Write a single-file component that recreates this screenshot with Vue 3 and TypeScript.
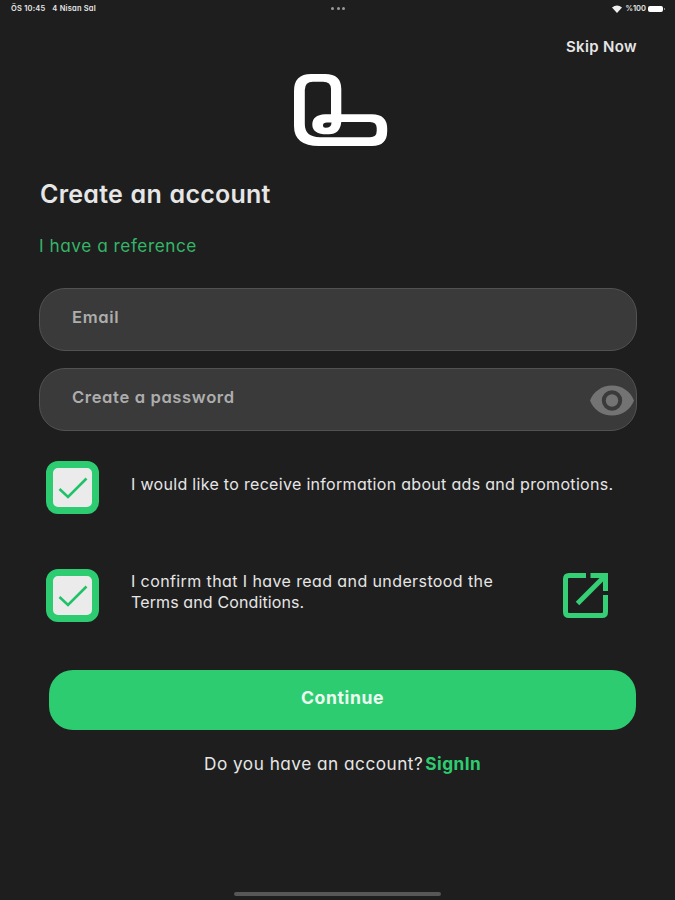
<script setup lang="ts">
import { ref } from 'vue'

interface Consent {
  id: string
  lines: string[]
  checked: boolean
  link: boolean
}

const email = ref('')
const password = ref('')
const showPassword = ref(false)

const consents = ref<Consent[]>([
  {
    id: 'ads',
    lines: ['I would like to receive information about ads and promotions.'],
    checked: true,
    link: false,
  },
  {
    id: 'terms',
    lines: ['I confirm that I have read and understood the', 'Terms and Conditions.'],
    checked: true,
    link: true,
  },
])
</script>

<template>
  <div class="screen">
    <header class="status">
      <div class="status-left"><span class="time">ÖS 10:45</span><span class="date">4 Nisan Sal</span></div>
      <div class="dots"><i></i><i></i><i></i></div>
      <div class="status-right">
        <svg class="wifi" viewBox="0 0 10 8"><path d="M5 8 0 2.6Q5-1.8 10 2.6Z" /></svg>
        <span class="percent">%100</span>
        <span class="battery"></span><span class="cap"></span>
      </div>
    </header>

    <div class="skip-row"><button class="skip">Skip Now</button></div>

    <svg class="logo" viewBox="0 0 94 74">
      <path
        fill-rule="evenodd"
        d="M0 52V17Q0 0 17 0H31Q47.300 0 47.300 15V40.300H78Q93.200 40.300 93.200 55V57Q93.200 72 78 72H25Q0 72 0 52Z
        M10.800 50V16Q10.800 7.700 19 7.700H29Q37 7.700 37 15V40.300H31Q18.300 41 18.300 50.500Q18.300 60.300 33 60.300H35Q46 60.300 47.300 48H76Q82.700 48 82.700 54V57Q82.700 63.200 76 63.200H26Q10.800 63.200 10.800 50Z
        M37.500 48.500H33Q29 48.500 29 51.300Q29 53.800 31.500 53.800Q37.500 53.800 37.500 48.500Z"
      />
    </svg>

    <main class="form">
      <h1 class="title">Create an account</h1>
      <a class="reference">I have a reference</a>

      <label class="field"><input v-model="email" class="input email" type="text" placeholder="Email" /></label>
      <label class="field">
        <input v-model="password" class="input password" :type="showPassword ? 'text' : 'password'" placeholder="Create a password" />
        <svg class="eye" viewBox="0 0 44 30" @click="showPassword = !showPassword">
          <path
            fill-rule="evenodd"
            d="M22 0C12 0 3.500 6 0 15C3.500 24 12 30 22 30S40.500 24 44 15C40.500 6 32 0 22 0ZM22 4.800A10.200 10.200 0 1 1 22 25.200A10.200 10.200 0 1 1 22 4.800Z"
          />
          <circle cx="22" cy="15" r="6.200" />
        </svg>
      </label>

      <div v-for="c in consents" :key="c.id" class="consent" :class="c.id">
        <button class="check" @click="c.checked = !c.checked">
          <svg v-if="c.checked" viewBox="0 0 30 22"><path d="M1.500 12 10 20 28.500 1.500" /></svg>
        </button>
        <div class="consent-text">
          <p v-for="line in c.lines" :key="line">{{ line }}</p>
        </div>
        <svg v-if="c.link" class="open" viewBox="0 0 45 45">
          <path class="box" d="M23 2.500H6Q2.500 2.500 2.500 6V39Q2.500 42.500 6 42.500H39Q42.500 42.500 42.500 39V22" />
          <path class="head" d="M27.500 2.500H42.500V18" />
          <path class="shaft" d="M41.500 3.500 14.500 30.500" />
        </svg>
      </div>

      <button class="continue">Continue</button>
      <p class="signin"><span class="question">Do you have an account?</span><a>SignIn</a></p>
    </main>

    <div class="home"></div>
  </div>
</template>

<style>
body {
  margin: 0;
  background: #1e1e1e;
}
</style>

<style scoped>
.screen {
  box-sizing: border-box;
  width: 675px;
  height: 900px;
  display: flex;
  flex-direction: column;
  overflow: hidden;
  background: #1e1e1e;
  color: #e6e6e6;
  font-family: Inter, 'Noto Sans', sans-serif;
  font-feature-settings: 'cv11';
}
button {
  border: 0;
  padding: 0;
  font: inherit;
  font-feature-settings: inherit;
  color: inherit;
}
h1,
p {
  margin: 0;
}
.status {
  display: grid;
  grid-template-columns: 1fr auto 1fr;
  align-items: center;
  height: 17px;
  padding: 0 10px 0 11px;
  font-size: 7.5px;
  font-weight: 600;
  white-space: nowrap;
}
.status-left {
  display: flex;
  gap: 7px;
  letter-spacing: 0.2px;
}
.dots {
  display: flex;
  gap: 2.5px;
}
.dots i {
  width: 3px;
  height: 3px;
  border-radius: 50%;
  background: #999;
}
.status-right {
  display: flex;
  justify-content: flex-end;
  align-items: center;
}
.wifi {
  width: 10px;
  height: 8px;
  margin-right: 3px;
  fill: #eee;
}
.battery {
  width: 15px;
  height: 6px;
  margin-left: 2px;
  border-radius: 2px;
  background: #fff;
}
.cap {
  width: 1px;
  height: 2px;
  margin-left: 1px;
  background: #888;
}
.skip-row {
  display: flex;
  justify-content: flex-end;
  height: 57px;
  padding: 20px 38px 0 0;
  box-sizing: border-box;
}
.skip {
  height: 20px;
  background: none;
  font-size: 15px;
  line-height: 20px;
  font-weight: 600;
  letter-spacing: 0.35px;
}
.logo {
  width: 94px;
  height: 74px;
  margin-left: 294px;
  fill: #fff;
}
.form {
  display: flex;
  flex-direction: column;
  padding: 30px 38px 0 39px;
}
.title {
  height: 32px;
  padding-left: 1px;
  font-size: 25px;
  line-height: 32px;
  font-weight: 600;
  letter-spacing: 0.25px;
  word-spacing: 1px;
}
.reference {
  height: 24px;
  margin-top: 24px;
  font-size: 17.2px;
  line-height: 24px;
  letter-spacing: 0.55px;
  color: #35b568;
}
.field {
  display: flex;
  align-items: center;
  box-sizing: border-box;
  height: 63px;
  margin-top: 17px;
  padding: 0 2px 0 32px;
  border: 1px solid #525252;
  border-radius: 26px;
  background: #3a3a3a;
}
.reference + .field {
  margin-top: 30px;
}
.input {
  flex: 1;
  min-width: 0;
  height: 24px;
  margin-bottom: 5px;
  padding: 0;
  border: 0;
  outline: 0;
  background: none;
  color: #e6e6e6;
  font: 600 16.6px/24px Inter, sans-serif;
  font-feature-settings: inherit;
  letter-spacing: 0.62px;
}
.input::placeholder {
  color: #adadad;
  opacity: 1;
}
.eye {
  width: 44px;
  height: 31px;
  margin-top: 1px;
  fill: #737373;
}
.consent {
  display: flex;
  height: 53px;
  margin-top: 55px;
  padding-left: 7px;
}
.consent.ads {
  margin-top: 30px;
}
.check {
  display: flex;
  align-items: center;
  justify-content: center;
  box-sizing: border-box;
  flex: none;
  width: 53px;
  height: 53px;
  border: 7px solid #2ecc71;
  border-radius: 12px;
  background: #ebebeb;
}
.check svg {
  width: 30px;
  height: 22px;
  margin-top: 1px;
  fill: none;
  stroke: #20c268;
  stroke-width: 2.6;
}
.consent-text {
  flex: 1;
  margin: 13px 0 0 32px;
  font-size: 16px;
  line-height: 20.5px;
  letter-spacing: 0.31px;
  white-space: nowrap;
}
.terms .consent-text {
  margin-top: 2px;
  letter-spacing: 0.4px;
}
.terms .consent-text p + p {
  letter-spacing: 0.12px;
}
.open {
  flex: none;
  width: 45px;
  height: 45px;
  margin: 4px 29px 0 0;
  fill: none;
  stroke: #35cf75;
  stroke-width: 5;
}
.continue {
  height: 60px;
  margin: 48px 1px 0 10px;
  padding-bottom: 5px;
  border-radius: 24px;
  background: #2ecc71;
  color: #ecfaf1;
  font-size: 17.6px;
  font-weight: 700;
  letter-spacing: 0.6px;
}
.signin {
  display: flex;
  gap: 2px;
  height: 24px;
  margin-top: 22px;
  padding-left: 165px;
  font-size: 17.2px;
  line-height: 24px;
  letter-spacing: 0.5px;
  white-space: nowrap;
}
.signin a {
  color: #2ecc71;
  font-weight: 700;
}
.home {
  width: 207px;
  height: 4px;
  margin: auto 0 4px 234px;
  border-radius: 2px;
  background: #575757;
}
</style>
